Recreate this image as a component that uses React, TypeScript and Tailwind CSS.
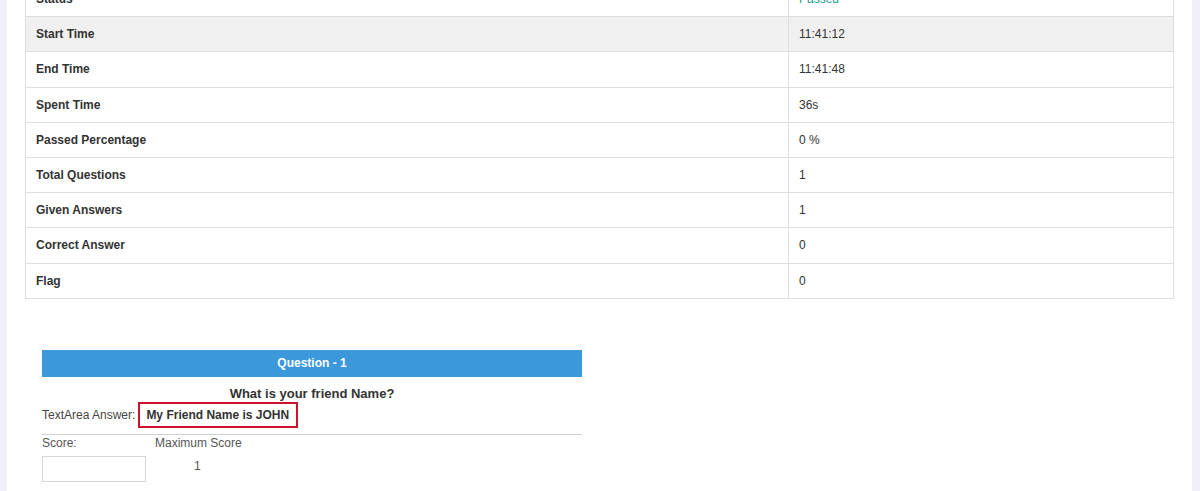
import React from 'react';

const rows: { label: string; value: string; shade?: boolean; green?: boolean }[] = [
  { label: 'Status', value: 'Passed', green: true },
  { label: 'Start Time', value: '11:41:12', shade: true },
  { label: 'End Time', value: '11:41:48' },
  { label: 'Spent Time', value: '36s' },
  { label: 'Passed Percentage', value: '0 %' },
  { label: 'Total Questions', value: '1' },
  { label: 'Given Answers', value: '1' },
  { label: 'Correct Answer', value: '0' },
  { label: 'Flag', value: '0' },
];

export default function App() {
  return (
    <div className="flex h-[491px] w-[1200px] overflow-hidden bg-[#f1f0f9] font-['Liberation_Sans',Arial,sans-serif] text-[12px] text-[#333]">
      <div className="w-[7px] shrink-0" />
      <div className="flex w-[1185px] shrink-0 flex-col bg-white">
        <div className="ml-[18px] mt-[-20px] w-[1149px] border border-[#dedede]">
          {rows.map((r, i) => (
            <div
              key={r.label}
              className={`flex h-[35.2px] ${i > 0 ? 'border-t border-[#dedede]' : ''} ${r.shade ? 'bg-[#f0f0f0]' : ''}`}
            >
              <div className="flex w-[763px] items-center border-r border-[#dedede] pl-[10px] font-bold">
                {r.label}
              </div>
              <div className={`flex items-center pl-[10px] ${r.green ? 'text-[#1a9c8c]' : ''}`}>{r.value}</div>
            </div>
          ))}
        </div>

        <div className="ml-[35px] mt-[51px] w-[540px]">
          <div className="flex h-[27px] items-center justify-center bg-[#3a98db] font-bold text-white">
            Question - 1
          </div>
          <div className="mt-[9px] text-center text-[13px] font-bold leading-[16px]">What is your friend Name?</div>
          <div className="mt-[0px] flex items-center">
            <span className="text-[#444]">TextArea Answer:</span>
            <span className="ml-[3px] flex h-[26px] w-[160px] items-center border-2 border-[#d0112b] pl-[6px] font-bold">
              My Friend Name is JOHN
            </span>
          </div>
          <div className="mt-[6px] border-t border-[#cfcfcf]" />
          <div className="mt-[1px] flex">
            <div className="w-[113px]">
              <div className="text-[#555] leading-[14px]">Score:</div>
              <div className="mt-[6px] h-[26px] w-[104px] border border-[#d8d8d8] bg-white" />
            </div>
            <div>
              <div className="text-[#555] leading-[14px]">Maximum Score</div>
              <div className="mt-[7px] pl-[39px] text-[#555]">1</div>
            </div>
          </div>
        </div>
      </div>
    </div>
  );
}
